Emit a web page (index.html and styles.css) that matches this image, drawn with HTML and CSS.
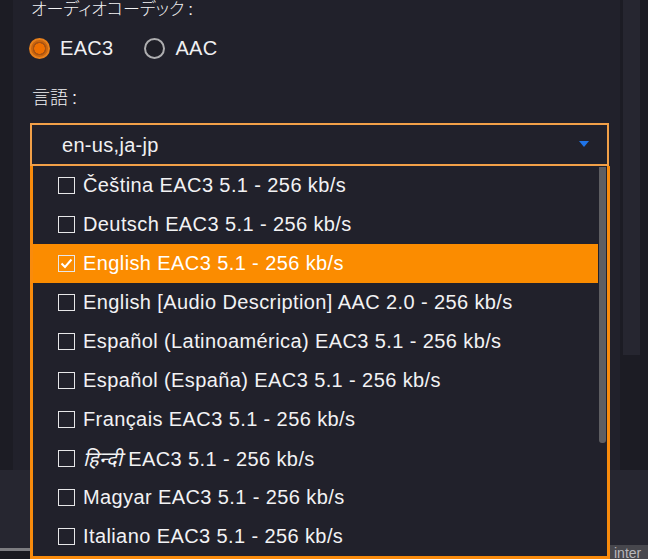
FILE: index.html
```html
<!DOCTYPE html>
<html lang="ja">
<head>
<meta charset="utf-8">
<title>Audio settings</title>
<link rel="stylesheet" href="styles.css">
</head>
<body>
<div class="window">
  <div class="top">
    <div class="panel">
      <div class="label codec-label">オーディオコーデック<span class="colon">:</span></div>
      <div class="radios">
        <label class="radio-item"><span class="radio checked"></span><span class="radio-text">EAC3</span></label>
        <label class="radio-item"><span class="radio"></span><span class="radio-text">AAC</span></label>
      </div>
      <div class="label lang-label">言語<span class="colon">:</span></div>
      <div class="select">
        <span class="select-value">en-us,ja-jp</span>
        <svg class="arrow" width="10" height="6" viewBox="0 0 10 6"><polygon points="0,0 10,0 5,6" fill="#1f74e8"/></svg>
      </div>
    </div>
    <div class="rail"></div>
  </div>
  <div class="lower"></div>
  <div class="statusbar"><span class="status-spacer"></span><span class="status-label">inter</span></div>

  <div class="dropdown">
    <ul class="options">
      <li class="option"><span class="box"></span><span class="opt-text">Čeština EAC3 5.1 - 256 kb/s</span></li>
      <li class="option"><span class="box"></span><span class="opt-text">Deutsch EAC3 5.1 - 256 kb/s</span></li>
      <li class="option selected"><span class="box"><svg width="13" height="11" viewBox="0 0 13 11"><polyline points="1.5,5.5 5,9 11.5,1.5" fill="none" stroke="#fff" stroke-width="2"/></svg></span><span class="opt-text">English EAC3 5.1 - 256 kb/s</span></li>
      <li class="option"><span class="box"></span><span class="opt-text">English [Audio Description] AAC 2.0 - 256 kb/s</span></li>
      <li class="option"><span class="box"></span><span class="opt-text">Español (Latinoamérica) EAC3 5.1 - 256 kb/s</span></li>
      <li class="option"><span class="box"></span><span class="opt-text">Español (España) EAC3 5.1 - 256 kb/s</span></li>
      <li class="option"><span class="box"></span><span class="opt-text">Français EAC3 5.1 - 256 kb/s</span></li>
      <li class="option"><span class="box"></span><span class="opt-text"><i class="hindi">हिन्दी</i> EAC3 5.1 - 256 kb/s</span></li>
      <li class="option"><span class="box"></span><span class="opt-text">Magyar EAC3 5.1 - 256 kb/s</span></li>
      <li class="option"><span class="box"></span><span class="opt-text">Italiano EAC3 5.1 - 256 kb/s</span></li>
    </ul>
    <div class="scrollbar"><div class="thumb"></div></div>
  </div>
</div>
</body>
</html>
```

FILE: styles.css
```css
* { box-sizing: border-box; }
html, body { margin: 0; padding: 0; }
body {
  background: #1b1b22;
  font-family: "Liberation Sans", Arial, "Noto Sans CJK JP", sans-serif;
  color: #f0f0f2;
}
.window {
  position: relative;
  width: 648px;
  height: 559px;
  overflow: hidden;
  display: flex;
  flex-direction: column;
  background: #1c1c24;
}
.top {
  height: 470px;
  display: flex;
  flex-shrink: 0;
}
.panel {
  margin-left: 13px;
  width: 607px;
  background: #21212b;
  padding-left: 17px;
  padding-right: 10px;
}
.rail {
  margin-left: 3px;
  width: 17px;
  height: 355px;
  background: #262630;
}
.label {
  font-family: "Noto Sans CJK JP", sans-serif;
  font-weight: 300;
  font-size: 18px;
  line-height: 20px;
  height: 20px;
  color: #f2f2f4;
}
.colon {
  font-family: "Liberation Sans", sans-serif;
  line-height: 1;
  margin-left: 4px;
}
.codec-label {
  margin-top: -2px;
  padding-left: 1px;
  font-size: 17px;
  font-feature-settings: "palt";
}
.radios {
  display: flex;
  align-items: center;
  height: 20px;
  margin-top: 20px;
}
.radio-item {
  display: flex;
  align-items: center;
  margin-right: 32px;
}
.radio {
  width: 21px;
  height: 21px;
  border-radius: 50%;
  border: 2.5px solid #aeaeb0;
  background: #1e1e26;
  margin-left: -1px;
}
.radio.checked {
  border-color: #e8801c;
  background: radial-gradient(circle, #f07000 0 5px, #a85212 5.5px 6.5px, #c8650f 7px);
}
.radio-text {
  font-size: 20px;
  letter-spacing: 0.3px;
  margin-left: 10px;
  line-height: 22px;
}
.lang-label {
  margin-top: 28px;
  padding-left: 2px;
}
.select {
  margin-top: 17px;
  width: 579px;
  height: 43px;
  border: 2px solid #f2a048;
  display: flex;
  align-items: center;
  padding-left: 30px;
  padding-right: 18px;
  background: #21212b;
}
.select-value {
  font-size: 20px;
  letter-spacing: 0.3px;
  flex: 1;
  margin-top: 1px;
}
.arrow { margin-top: -2px; }
.lower {
  height: 78px;
  flex-shrink: 0;
  background: #262630;
}
.statusbar {
  height: 11px;
  flex-shrink: 0;
  display: flex;
  align-items: flex-start;
  background: #1a1a20;
  border-top: 3px solid #7c7c80;
  overflow: visible;
  position: relative;
}
.status-spacer { flex: 1; }
.status-label {
  width: 38px;
  margin-top: -6px;
  height: 14px;
  background: #47474d;
  color: #b8b8bc;
  font-size: 14px;
  line-height: 16px;
  padding-left: 4px;
  overflow: hidden;
}
.dropdown {
  position: absolute;
  left: 30px;
  top: 166px;
  width: 580px;
  height: 393px;
  border: 3px solid #f98b0c;
  border-top: 0;
  background: #21212b;
  display: flex;
}
.options {
  list-style: none;
  margin: 0;
  padding: 0;
  width: 565px;
}
.option {
  height: 39px;
  display: flex;
  align-items: center;
  padding-left: 25px;
  font-size: 20px;
  letter-spacing: 0.4px;
  color: #f2f2f4;
  white-space: nowrap;
}
.option.selected {
  background: #fb8c00;
  color: #fff;
}
.box {
  width: 17px;
  height: 17px;
  border: 1.5px solid #e6e6e8;
  display: flex;
  align-items: center;
  justify-content: center;
  flex-shrink: 0;
}
.opt-text { margin-left: 8px; }
.hindi { font-style: italic; }
.scrollbar {
  width: 9px;
  padding: 1px 1px 0 1px;
}
.thumb {
  width: 7px;
  height: 276px;
  background: #5e5e62;
  border-radius: 0 0 3px 3px;
}
```
